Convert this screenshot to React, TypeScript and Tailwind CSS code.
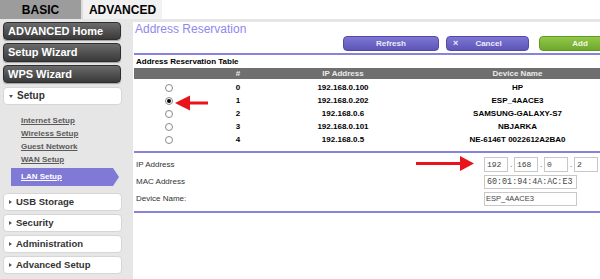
import React from "react";

const darkBtn =
  "h-[18px] w-[118px] rounded-[4px] bg-gradient-to-b from-[#6b6b6b] to-[#3a3a3a] border border-[#2e2e2e] text-white text-[11px] font-bold leading-[16px] pl-[4px] shadow-[0_1px_1px_rgba(0,0,0,0.3)]";
const lightBtn =
  "h-[18px] w-[119px] rounded-[4px] bg-white border border-[#d6d6d6] text-[#333] text-[9.5px] font-bold leading-[16px] pl-[5px] flex items-center gap-[4px]";

function Tri({ down }: { down?: boolean }) {
  return down ? (
    <span className="inline-block w-0 h-0 border-l-[2.5px] border-r-[2.5px] border-t-[3.5px] border-l-transparent border-r-transparent border-t-[#555]" />
  ) : (
    <span className="inline-block w-0 h-0 border-t-[2.5px] border-b-[2.5px] border-l-[3.5px] border-t-transparent border-b-transparent border-l-[#555]" />
  );
}

function Radio({ checked }: { checked?: boolean }) {
  return (
    <div className="w-[8px] h-[8px] rounded-full border border-[#8a8a8a] bg-white flex items-center justify-center">
      {checked && <div className="w-[4px] h-[4px] rounded-full bg-black" />}
    </div>
  );
}

const rows = [
  { n: "0", ip: "192.168.0.100", name: "HP" },
  { n: "1", ip: "192.168.0.202", name: "ESP_4AACE3", checked: true },
  { n: "2", ip: "192.168.0.6", name: "SAMSUNG-GALAXY-S7" },
  { n: "3", ip: "192.168.0.101", name: "NBJARKA" },
  { n: "4", ip: "192.168.0.5", name: "NE-6146T 0022612A2BA0" },
];

export default function App() {
  return (
    <div className="relative w-[600px] h-[279px] overflow-hidden bg-[#e6e6e6] font-['Liberation_Sans',Arial,sans-serif]">
      {/* tabs */}
      <div className="flex h-[19px] bg-white">
        <div className="w-[81px] bg-[#9c9c9c] flex items-center justify-center text-[12px] font-bold text-black">
          BASIC
        </div>
        <div className="w-[2px] bg-[#dcdcdc]" />
        <div className="w-[79px] bg-[#f1f1f1] flex items-center justify-center text-[12px] font-bold text-black">
          ADVANCED
        </div>
      </div>

      <div className="flex h-[260px]">
        {/* sidebar */}
        <div className="w-[133px] shrink-0 pl-[3px] pt-[3px] flex flex-col">
          <div className={darkBtn}>ADVANCED Home</div>
          <div className={darkBtn + " mt-[3px] !h-[19px] leading-[17px]"}>Setup Wizard</div>
          <div className={darkBtn + " mt-[3px]"}>WPS Wizard</div>
          <div className={lightBtn + " mt-[4px] text-[10px]"}>
            <Tri down />
            <span>Setup</span>
          </div>
          <div className="pt-[9px] pl-[18px] flex flex-col">
            {["Internet Setup", "Wireless Setup", "Guest Network", "WAN Setup"].map((t) => (
              <div key={t} className="h-[13px] leading-[13px] text-[8px] font-bold text-[#5a5a5a] underline">
                {t}
              </div>
            ))}
          </div>
          <div className="mt-[2px] ml-[8px] flex h-[18px]">
            <div className="w-[102px] bg-[#807ad6] text-white text-[8px] font-bold underline leading-[18px] pl-[10px]">
              LAN Setup
            </div>
            <svg width="6" height="18" viewBox="0 0 6 18">
              <polygon points="0,0 6,9 0,18" fill="#807ad6" />
            </svg>
          </div>
          <div className={lightBtn + " mt-[7px]"}>
            <Tri />
            <span>USB Storage</span>
          </div>
          <div className={lightBtn + " mt-[3px]"}>
            <Tri />
            <span>Security</span>
          </div>
          <div className={lightBtn + " mt-[3px]"}>
            <Tri />
            <span>Administration</span>
          </div>
          <div className={lightBtn + " mt-[3px]"}>
            <Tri />
            <span>Advanced Setup</span>
          </div>
        </div>

        {/* content */}
        <div className="flex-1 mt-[3px] bg-white overflow-hidden pl-[1px]">
          <div className="h-[14px] leading-[14px] text-[12px] text-[#8f88ee] pl-[1px]">Address Reservation</div>
          <div className="flex h-[15px] ml-[209px] w-[300px]">
            <div className="w-[96px] shrink-0 rounded-[4px] border border-[#524aa5] bg-gradient-to-b from-[#7e76d4] to-[#5e56b6] text-[#ececf8] text-[8px] font-bold flex items-center justify-center">
              Refresh
            </div>
            <div className="w-[83px] shrink-0 ml-[7px] rounded-[4px] border border-[#524aa5] bg-gradient-to-b from-[#7e76d4] to-[#5e56b6] text-[#ececf8] text-[8px] font-bold flex items-center relative">
              <span className="absolute left-[6px] text-[9px]">×</span>
              <span className="w-full text-center pl-[2px]">Cancel</span>
            </div>
            <div className="w-[82px] shrink-0 ml-[10px] rounded-[4px] border border-[#5f9a22] bg-gradient-to-b from-[#92c84a] to-[#6ea82c] text-[#f4f8e8] text-[8px] font-bold flex items-center justify-center">
              Add
            </div>
          </div>
          <div className="mt-[2px] h-[2px] bg-[#8882dc]" />
          <div className="h-[13px] leading-[13px] text-[8px] font-bold text-black pl-[2px]">Address Reservation Table</div>
          <div className="w-[487px]">
            <div className="grid grid-cols-[70px_68px_142px_207px] h-[11px] bg-[#6f6f6f] text-[#ececec] text-[8px] font-bold items-center">
              <div />
              <div className="text-center">#</div>
              <div className="text-center">IP Address</div>
              <div className="text-center">Device Name</div>
            </div>
            <div className="mt-[2px]">
              {rows.map((r) => (
                <div key={r.n} className="grid grid-cols-[70px_68px_142px_207px] h-[13px] text-[8px] font-bold text-black items-center">
                  <div className="flex justify-center">
                    <Radio checked={r.checked} />
                  </div>
                  <div className="text-center">{r.n}</div>
                  <div className="text-center">{r.ip}</div>
                  <div className="text-center">{r.name}</div>
                </div>
              ))}
            </div>
          </div>
          <div className="mt-[5px] h-[2px] bg-[#8882dc]" />
          <div className="flex flex-col text-[8px] text-[#333]">
            <div className="flex items-center mt-[4px] h-[15px]">
              <div className="w-[350px] pl-[2px]">IP Address</div>
              {["192", "168", "0", "2"].map((v, i) => (
                <React.Fragment key={i}>
                  {i > 0 && <span className="w-[6px] text-center text-[8px]">.</span>}
                  <div className="w-[24px] h-[15px] border border-[#c8c8c8] font-['Liberation_Mono',monospace] text-[8px] leading-[13px] pl-[2px] text-[#444]">
                    {v}
                  </div>
                </React.Fragment>
              ))}
            </div>
            <div className="flex items-center mt-[3px] h-[14px]">
              <div className="w-[350px] pl-[2px]">MAC Address</div>
              <div className="w-[93px] h-[14px] border border-[#c8c8c8] font-['Liberation_Mono',monospace] text-[8.4px] leading-[12px] pl-[2px] text-[#444] overflow-hidden whitespace-nowrap">
                60:01:94:4A:AC:E3
              </div>
            </div>
            <div className="flex items-center mt-[3px] h-[14px]">
              <div className="w-[350px] pl-[2px]">Device Name:</div>
              <div className="w-[93px] h-[14px] border border-[#c8c8c8] text-[7.5px] leading-[12px] pl-[1px] text-[#444]">
                ESP_4AACE3
              </div>
            </div>
          </div>
          <div className="mt-[5px] h-[2px] bg-[#8882dc]" />
        </div>
      </div>

      {/* red annotation arrows */}
      <svg className="absolute left-[174px] top-[95px]" width="35" height="16" viewBox="0 0 35 16">
        <polygon points="1,8 16,0.5 16,6.5 34,6.5 34,9.5 16,9.5 16,15.5" fill="#e8131b" />
      </svg>
      <svg className="absolute left-[415px] top-[156px]" width="60" height="16" viewBox="0 0 60 16">
        <polygon points="59,7.5 45,0 45,6 1,6 1,9 45,9 45,15" fill="#e8131b" />
      </svg>
    </div>
  );
}
